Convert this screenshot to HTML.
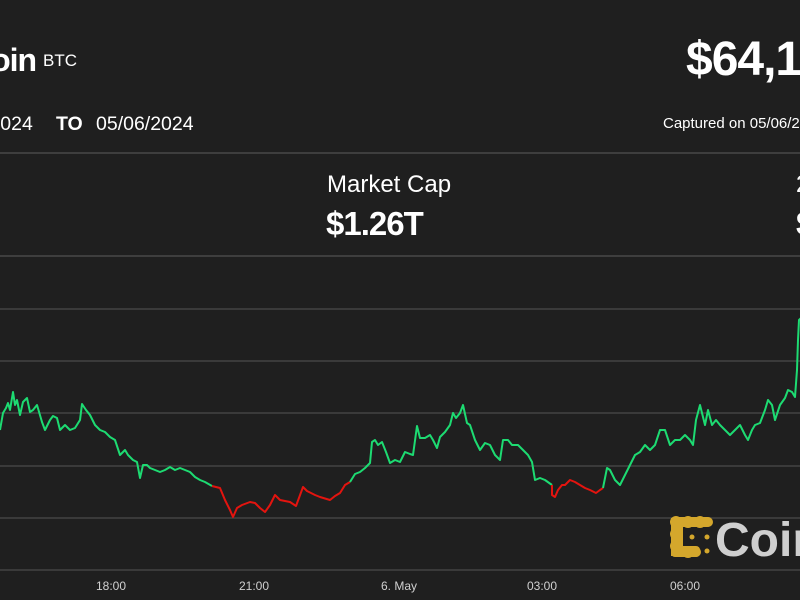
<!DOCTYPE html>
<html><head><meta charset="utf-8"><style>
body{margin:0;width:800px;height:600px;background:#1f1f1f;overflow:hidden;position:relative;font-family:"Liberation Sans",sans-serif;color:#fff}
.a{position:absolute;white-space:nowrap}
.hl{position:absolute;left:0;width:800px;height:2px;background:#3e3e3e}
.ax{position:absolute;top:579px;font-size:12px;color:#d0d0d0}
</style></head><body>
<div class="a" style="left:-31px;top:42px;font-size:32px;font-weight:bold;letter-spacing:-1px">Coin</div>
<div class="a" style="left:43px;top:51px;font-size:17px">BTC</div>
<div class="a" style="left:686px;top:32px;font-size:48px;font-weight:bold;letter-spacing:-1px">$64,1</div>
<div class="a" style="left:-16px;top:113px;font-size:19.5px">/2024</div>
<div class="a" style="left:56px;top:113px;font-size:19.5px;font-weight:bold">TO</div>
<div class="a" style="left:96px;top:113px;font-size:19.5px">05/06/2024</div>
<div class="a" style="left:663px;top:115px;font-size:15px">Captured on 05/06/2</div>
<div class="hl" style="top:152px"></div>
<div class="a" style="left:327px;top:171px;font-size:24px">Market Cap</div>
<div class="a" style="left:326px;top:205px;font-size:33px;font-weight:bold;letter-spacing:-1px">$1.26T</div>
<div class="a" style="left:796px;top:171px;font-size:24px">2</div>
<div class="a" style="left:796px;top:205px;font-size:33px;font-weight:bold">$</div>
<div class="hl" style="top:255px"></div>
<svg class="a" style="left:0;top:0" width="800" height="600">
<g stroke="#3a3a3a" stroke-width="2">
<line x1="0" y1="309" x2="800" y2="309"/><line x1="0" y1="361" x2="800" y2="361"/><line x1="0" y1="413" x2="800" y2="413"/><line x1="0" y1="466" x2="800" y2="466"/><line x1="0" y1="518" x2="800" y2="518"/><line x1="0" y1="570" x2="800" y2="570"/>
</g>
<g fill="none" stroke-width="2" stroke-linejoin="round">
<polyline stroke="#1ddb72" points="0,430 3,413 6,408 8,403 10,410 13,392 15,405 17,400 20,415 23,402 27,398 30,412 33,410 37,405 42,422 45,430 50,420 53,416 57,418 60,430 65,425 70,430 75,428 80,420 82,404 86,410 90,415 95,425 100,430 105,432 110,437 115,440 120,455 125,450 128,455 133,460 137,462 140,478 143,465 147,465 150,468 155,470 160,472 165,470 170,467 175,470 180,468 185,470 190,472 195,477 200,480 205,482 212,486"/>
<polyline stroke="#e3140f" points="212,486 220,488 225,500 230,510 233,517 237,508 242,505 250,502 255,503 260,508 265,512 270,505 275,495 280,500 290,502 296,506 303,487 307,491 315,495 320,497 330,500 335,496 340,493 345,485 350,482"/>
<polyline stroke="#1ddb72" points="350,482 355,474 360,472 365,468 370,463 372,442 375,440 378,445 382,442 386,452 390,463 395,460 400,462 405,452 410,454 413,455 417,426 420,438 425,438 430,435 433,440 437,448 440,437 445,432 450,425 453,413 456,418 460,413 463,405 467,423 470,425 475,440 480,450 485,443 490,445 495,455 500,460 503,440 508,440 512,445 518,445 523,450 528,455 532,462 535,480 540,478 545,480 552,485"/>
<polyline stroke="#e3140f" points="552,485 552,495 555,497 558,490 562,485 565,485 570,480 575,482 580,485 585,488 590,490 596,493 600,490 603,488"/>
<polyline stroke="#1ddb72" points="603,488 607,468 610,470 615,480 620,485 625,475 630,465 635,455 640,452 645,445 650,450 655,445 660,430 665,430 670,445 675,440 680,440 685,435 690,440 693,445 696,420 700,405 705,425 708,410 712,425 716,420 720,425 725,430 730,435 735,430 740,425 745,435 748,440 752,430 755,425 760,423 765,410 768,400 772,405 775,420 780,405 785,398 788,390 792,392 795,397 797,370 798,340 799,320 801,318"/>
</g>
<g fill="#d4a72c">
<circle cx="676" cy="522" r="6"/><circle cx="688" cy="522" r="6"/><circle cx="700" cy="522" r="6"/><circle cx="708" cy="522" r="5"/>
<circle cx="676" cy="534" r="6"/><circle cx="676" cy="546" r="6"/><circle cx="676" cy="552" r="5"/>
<circle cx="688" cy="552" r="6"/><circle cx="696" cy="552" r="5"/>
<rect x="671" y="518" width="12" height="38"/><rect x="671" y="517" width="40" height="10" rx="4"/><rect x="671" y="546" width="29" height="11" rx="4"/>
<circle cx="692" cy="537" r="2.5"/><circle cx="707" cy="537" r="2.5"/><circle cx="707" cy="551" r="2.5"/>
</g>
<text x="715" y="556" font-family="Liberation Sans" font-weight="bold" font-size="48" fill="#cfcfcf">Coin</text>
</svg>
<div class="ax" style="left:96px">18:00</div>
<div class="ax" style="left:239px">21:00</div>
<div class="ax" style="left:381px">6. May</div>
<div class="ax" style="left:527px">03:00</div>
<div class="ax" style="left:670px">06:00</div>
</body></html>
